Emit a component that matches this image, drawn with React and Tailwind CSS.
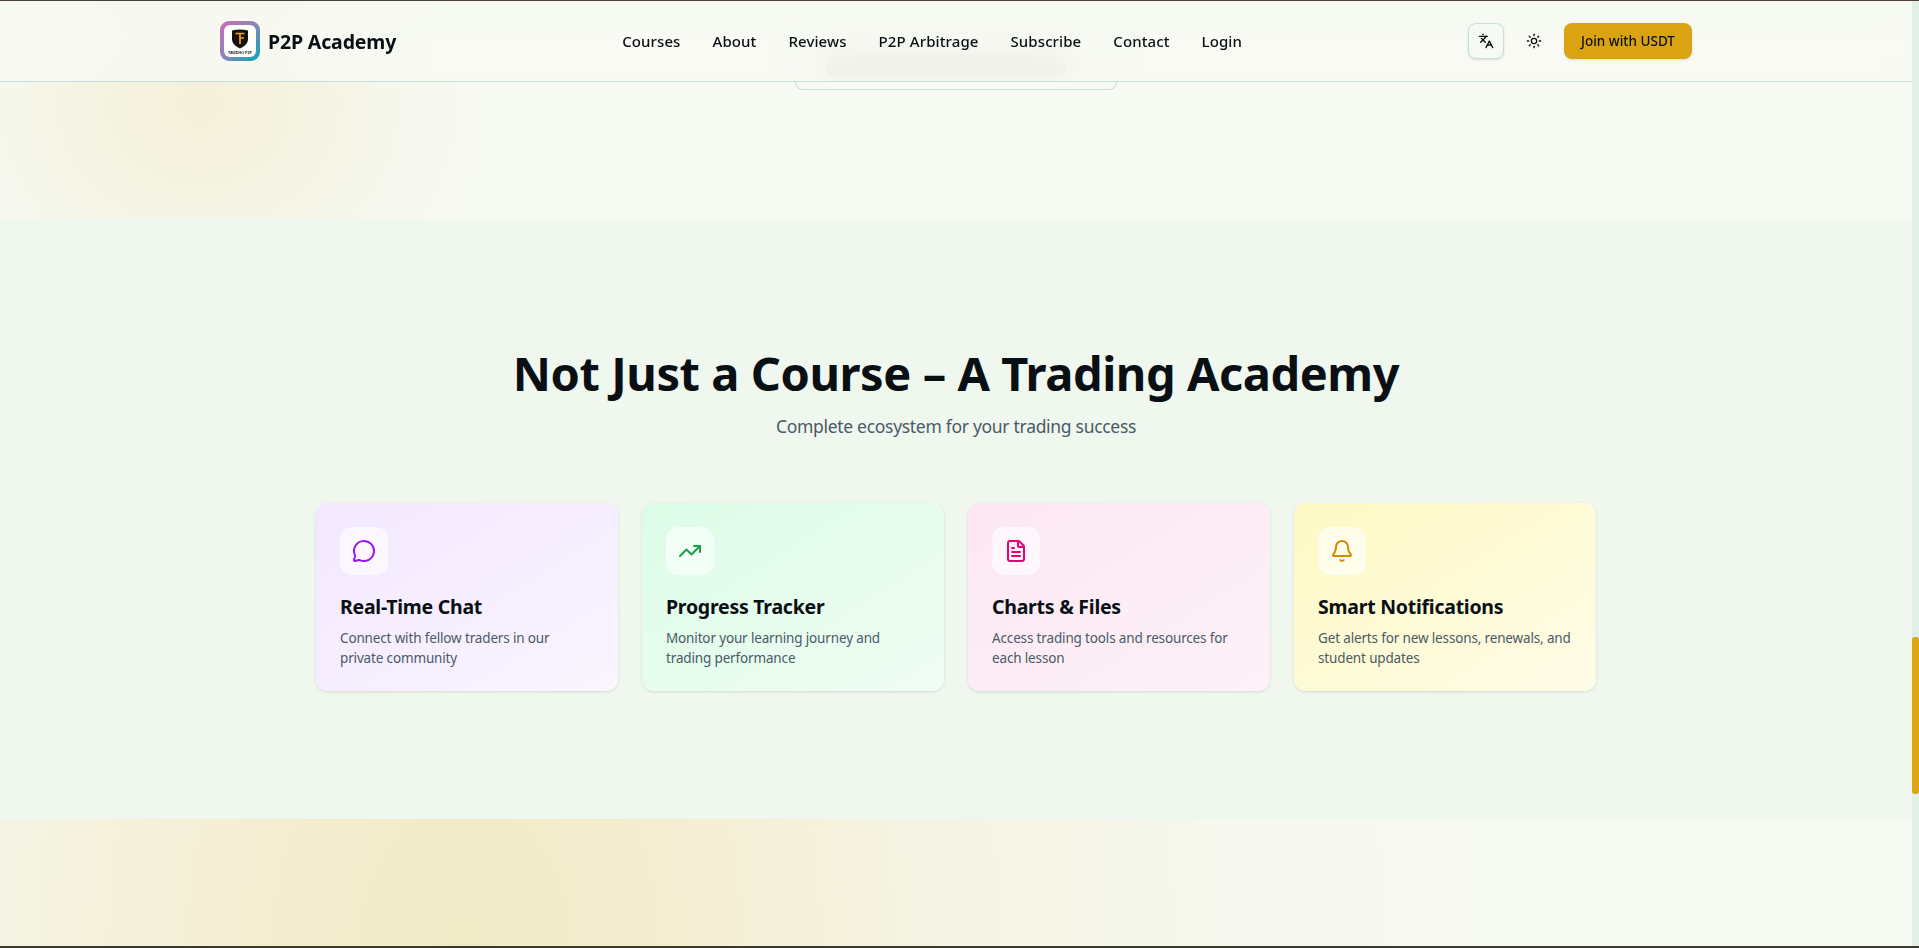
import { Languages, Sun, MessageCircle, TrendingUp, FileText, Bell } from 'lucide-react';

const navLinks = ['Courses', 'About', 'Reviews', 'P2P Arbitrage', 'Subscribe', 'Contact', 'Login'];

const features = [
  {
    title: 'Real-Time Chat',
    desc: 'Connect with fellow traders in our private community',
    Icon: MessageCircle,
    card: 'from-[#f3e8ff] to-[#faf5ff]',
    iconColor: 'text-[#9a12f5]',
  },
  {
    title: 'Progress Tracker',
    desc: 'Monitor your learning journey and trading performance',
    Icon: TrendingUp,
    card: 'from-[#dcfce7] to-[#f0fdf4]',
    iconColor: 'text-[#16a34a]',
  },
  {
    title: 'Charts & Files',
    desc: 'Access trading tools and resources for each lesson',
    Icon: FileText,
    card: 'from-[#fce7f3] to-[#fdf2f8]',
    iconColor: 'text-[#e6007a]',
  },
  {
    title: 'Smart Notifications',
    desc: 'Get alerts for new lessons, renewals, and student updates',
    Icon: Bell,
    card: 'from-[#fef9c3] to-[#fefce8]',
    iconColor: 'text-[#d68a04]',
  },
];

function Logo() {
  return (
    <svg width="40" height="40" viewBox="0 0 40 40" className="shrink-0">
      <defs>
        <linearGradient id="logoRing" x1="0" y1="0" x2="1" y2="1">
          <stop offset="0%" stopColor="#cf69b8" />
          <stop offset="50%" stopColor="#8a86b8" />
          <stop offset="100%" stopColor="#00a8b8" />
        </linearGradient>
      </defs>
      <rect width="40" height="40" rx="9" fill="url(#logoRing)" />
      <rect x="4" y="4" width="32" height="32" rx="6" fill="#ffffff" />
      <path d="M12 9.5 Q20 7.5 28 9.5 V19 Q27 24.5 20 27.5 Q13 24.5 12 19 Z" fill="#14120f" />
      <path d="M15.5 12.5 H24.5 M20 12.5 V23 M20 17 H24" stroke="#f0a21c" strokeWidth="1.7" fill="none" />
      <text x="20" y="32.5" textAnchor="middle" fontSize="3.7" fontWeight="700" fontFamily="Liberation Sans, sans-serif" fill="#222">TAWDHO P2P</text>
    </svg>
  );
}

function Header() {
  return (
    <header className="absolute top-0 left-0 right-0 z-10 h-[81px] border-b border-[#c5e0d8] bg-[#f7f9f3]/90 backdrop-blur-lg">
      <div className="mx-auto flex h-full max-w-[1536px] items-center justify-between px-8">
        <div className="flex items-center gap-2">
          <Logo />
          <span className="translate-y-px text-[19.5px] font-bold tracking-[-0.15px] text-[#0a0f14]">P2P Academy</span>
        </div>
        <nav className="flex items-center gap-8">
          {navLinks.map((link) => (
            <a key={link} className="text-[15px] font-medium tracking-[0.1px] text-[#0a0f14]">{link}</a>
          ))}
        </nav>
        <div className="flex items-center gap-3">
          <button className="flex h-9 w-9 items-center justify-center rounded-lg border border-[#c5e0d8] bg-[#f7f9f3] shadow-sm text-[#0a0f14]">
            <Languages size={16} />
          </button>
          <button className="flex h-9 w-9 items-center justify-center rounded-lg text-[#0a0f14]">
            <Sun size={16} />
          </button>
          <button className="h-9 w-32 rounded-lg bg-[#daa312] text-[13.5px] font-medium text-[#0a0f14] shadow-sm">
            Join with USDT
          </button>
        </div>
      </div>
    </header>
  );
}

function FeatureCard({ title, desc, Icon, card, iconColor }) {
  return (
    <div className={`rounded-xl bg-linear-to-br p-6 shadow-[0_1px_3px_rgba(0,0,0,0.12)] ${card}`}>
      <div className={`mb-4 flex h-12 w-12 items-center justify-center rounded-xl bg-white/60 ${iconColor}`}>
        <Icon size={24} />
      </div>
      <h3 className="mb-2 translate-y-[2px] text-[19.5px] font-bold leading-7 tracking-[-0.25px] text-[#0a0f14]">{title}</h3>
      <p className="translate-y-px text-[13.5px] leading-5 tracking-[-0.15px] text-[#4a5a66]">{desc}</p>
    </div>
  );
}

export default function App() {
  return (
    <div className="flex h-[948px] flex-col overflow-hidden bg-[#f7f9f3] font-['Noto_Sans','Open_Sans',sans-serif]">
      <div className="h-px bg-[#4a4036]" />
      <div className="flex min-h-0 flex-1">
        <main className="relative flex min-w-0 flex-1 flex-col">
          <Header />

          {/* part of the hero still showing under the header */}
          <section className="flex h-[218px] justify-center bg-[radial-gradient(ellipse_280px_240px_at_199px_105px,#f4f0da,#f5f3e2_40%,#f6f7ec_70%,#f7f9f3)]">
            <div className="flex h-[89px] w-[322px] items-end justify-center rounded-b-lg border border-[#c5e0d8] bg-[#f7f9f3] pb-[14px] pr-[20px]">
              <div className="h-[20px] w-[240px] rounded bg-[#70736a]" />
            </div>
          </section>

          <section className="bg-[#f0f7ee] py-32">
            <div className="mx-auto max-w-7xl">
              <h2 className="mb-4 translate-y-[2px] text-center text-[47px] font-bold leading-12 tracking-[-0.45px] text-[#0a0f14]">Not Just a Course – A Trading Academy</h2>
              <p className="mb-16 translate-y-px text-center text-[17.5px] leading-7 tracking-[-0.3px] text-[#4a5a66]">Complete ecosystem for your trading success</p>
              <div className="grid grid-cols-4 gap-6">
                {features.map((f) => (
                  <FeatureCard key={f.title} {...f} />
                ))}
              </div>
            </div>
          </section>

          <section className="flex-1 bg-[radial-gradient(ellipse_1000px_1400px_at_465px_130px,#f2eac6,#f4eed4_25%,#f5f3e2_45%,#f6f7ec_70%,#f7f9f3)]" />
        </main>

        <div className="w-[7px] shrink-0 bg-[#e2efe6]">
          <div className="mt-[636px] h-[157px] rounded-[3px] bg-[#dca512]" />
        </div>
      </div>
      <div className="h-[2px] bg-[#3a3a30]" />
    </div>
  );
}
